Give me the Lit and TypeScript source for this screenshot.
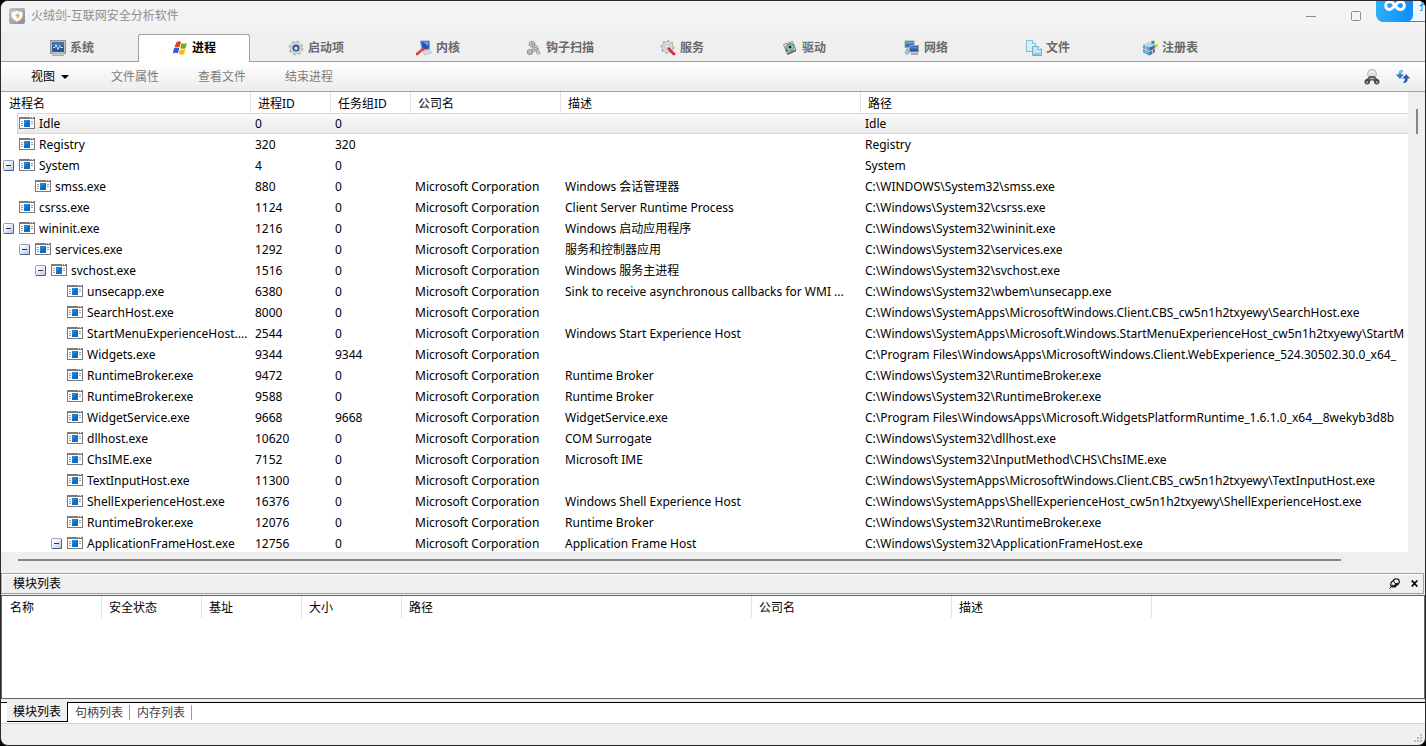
import { LitElement, html, svg, css, nothing, TemplateResult } from "lit";
import { customElement, state } from "lit/decorators.js";
import { classMap } from "lit/directives/class-map.js";
import { styleMap } from "lit/directives/style-map.js";

interface Tab {
  label: string;
  icon: TemplateResult;
}

interface Proc {
  depth: number;
  name: string;
  pid: number;
  group: number;
  company?: string;
  desc?: string;
  path: string;
  open?: boolean;
}

const MS = "Microsoft Corporation";

const p = (
  depth: number,
  name: string,
  pid: number,
  group: number,
  company: string,
  desc: string,
  path: string,
  open = false
): Proc => ({ depth, name, pid, group, company, desc, path, open });

const PROCS: Proc[] = [
  p(0, "Idle", 0, 0, "", "", "Idle"),
  p(0, "Registry", 320, 320, "", "", "Registry"),
  p(0, "System", 4, 0, "", "", "System", true),
  p(1, "smss.exe", 880, 0, MS, "Windows 会话管理器", "C:\\WINDOWS\\System32\\smss.exe"),
  p(0, "csrss.exe", 1124, 0, MS, "Client Server Runtime Process", "C:\\Windows\\System32\\csrss.exe"),
  p(0, "wininit.exe", 1216, 0, MS, "Windows 启动应用程序", "C:\\Windows\\System32\\wininit.exe", true),
  p(1, "services.exe", 1292, 0, MS, "服务和控制器应用", "C:\\Windows\\System32\\services.exe", true),
  p(2, "svchost.exe", 1516, 0, MS, "Windows 服务主进程", "C:\\Windows\\System32\\svchost.exe", true),
  p(3, "unsecapp.exe", 6380, 0, MS, "Sink to receive asynchronous callbacks for WMI ...", "C:\\Windows\\System32\\wbem\\unsecapp.exe"),
  p(3, "SearchHost.exe", 8000, 0, MS, "", "C:\\Windows\\SystemApps\\MicrosoftWindows.Client.CBS_cw5n1h2txyewy\\SearchHost.exe"),
  p(3, "StartMenuExperienceHost....", 2544, 0, MS, "Windows Start Experience Host", "C:\\Windows\\SystemApps\\Microsoft.Windows.StartMenuExperienceHost_cw5n1h2txyewy\\StartM"),
  p(3, "Widgets.exe", 9344, 9344, MS, "", "C:\\Program Files\\WindowsApps\\MicrosoftWindows.Client.WebExperience_524.30502.30.0_x64_"),
  p(3, "RuntimeBroker.exe", 9472, 0, MS, "Runtime Broker", "C:\\Windows\\System32\\RuntimeBroker.exe"),
  p(3, "RuntimeBroker.exe", 9588, 0, MS, "Runtime Broker", "C:\\Windows\\System32\\RuntimeBroker.exe"),
  p(3, "WidgetService.exe", 9668, 9668, MS, "WidgetService.exe", "C:\\Program Files\\WindowsApps\\Microsoft.WidgetsPlatformRuntime_1.6.1.0_x64__8wekyb3d8b"),
  p(3, "dllhost.exe", 10620, 0, MS, "COM Surrogate", "C:\\Windows\\System32\\dllhost.exe"),
  p(3, "ChsIME.exe", 7152, 0, MS, "Microsoft IME", "C:\\Windows\\System32\\InputMethod\\CHS\\ChsIME.exe"),
  p(3, "TextInputHost.exe", 11300, 0, MS, "", "C:\\Windows\\SystemApps\\MicrosoftWindows.Client.CBS_cw5n1h2txyewy\\TextInputHost.exe"),
  p(3, "ShellExperienceHost.exe", 16376, 0, MS, "Windows Shell Experience Host", "C:\\Windows\\SystemApps\\ShellExperienceHost_cw5n1h2txyewy\\ShellExperienceHost.exe"),
  p(3, "RuntimeBroker.exe", 12076, 0, MS, "Runtime Broker", "C:\\Windows\\System32\\RuntimeBroker.exe"),
  p(3, "ApplicationFrameHost.exe", 12756, 0, MS, "Application Frame Host", "C:\\Windows\\System32\\ApplicationFrameHost.exe", true),
];

const icon = (body: TemplateResult, w = 16, h = 16) =>
  html`<svg class="icon" width=${w} height=${h} viewBox="0 0 ${w} ${h}" aria-hidden="true">${body}</svg>`;

const TABS: Tab[] = [
  {
    label: "系统",
    icon: icon(svg`
      <rect x="0.5" y="0.5" width="15" height="13" fill="#b9c0c6" stroke="#8b949b"/>
      <rect x="2" y="2" width="12" height="10" fill="#2c568f"/>
      <path d="M2 2h12v4H2z" fill="#47719f"/>
      <path d="M3 7.500h2l1-3 2 5 1.500-4 1 2H13" fill="none" stroke="#c5ecf2" stroke-width="1"/>
      <path d="M2 13.500h12v2H2z" fill="#cfcfcf"/>
      <path d="M2 15.500h12" stroke="#a8a8a8"/>`),
  },
  {
    label: "进程",
    icon: icon(svg`
      <path d="M4.400 2.300C6 1 8 1.100 9 1.800L7.500 7.300C5.800 6.500 4 6.600 2.300 7.500z" fill="#e2411c"/>
      <path d="M9.500 3C11 4 13 4.100 14.900 3L13.500 8.200C12 9.100 10 9 8.300 8.200z" fill="#6cae1e"/>
      <path d="M2 8.300C3.700 7.400 5.600 7.300 7.200 8.200L6 13.300C4.400 12.500 2.500 12.500 0.800 13.500z" fill="#3a55d8"/>
      <path d="M8 9.200C9.700 10 11.600 10 13.400 9.200L12.200 13.900C10.500 14.900 8.500 14.900 6.800 14z" fill="#fbb80f"/>`),
  },
  {
    label: "启动项",
    icon: icon(svg`
      <circle cx="8" cy="8" r="6.500" fill="none" stroke="#b9bdc2" stroke-width="2" stroke-dasharray="2.600 2.500"/>
      <circle cx="8" cy="8" r="5.700" fill="#dcdfe3" stroke="#b0b4ba" stroke-width="0.800"/>
      <circle cx="8" cy="8" r="3.600" fill="#33517e"/>
      <circle cx="8" cy="8.300" r="1.900" fill="#b6d2f0"/>`),
  },
  {
    label: "内核",
    icon: icon(svg`
      <path d="M4.500 1L13.500 1 13.500 9 6 10z" fill="#1f55c0" stroke="#8ca3c4"/>
      <path d="M7 2l5.500 0-.3 4z" fill="#6fa4ec"/>
      <path d="M7 11.500l6.500-1.500 2 3-7 1.800z" fill="#d9dde2" stroke="#a9b0b8" stroke-width=".7"/>
      <path d="M1 14L7.500 8.500" stroke="#c8352a" stroke-width="2.600" stroke-linecap="round"/>
      <path d="M1.200 13.200L7 8.500" stroke="#f08c7e" stroke-width=".8"/>`),
  },
  {
    label: "钩子扫描",
    icon: icon(svg`
      <circle cx="6" cy="4" r="2.800" fill="#c9cbc9" stroke="#8e908e" stroke-width="1.300" stroke-dasharray="1.500 .8"/>
      <circle cx="6" cy="4" r="1" fill="#efefef" stroke="#666" stroke-width=".6"/>
      <circle cx="9.300" cy="8.500" r="2.800" fill="#d5d6d5" stroke="#8c8f8c" stroke-width="1.300" stroke-dasharray="1.500 .8"/>
      <circle cx="9.300" cy="8.500" r="1.100" fill="#efefef" stroke="#555" stroke-width=".6"/>
      <circle cx="4" cy="12" r="2.600" fill="#b9bbb9" stroke="#868986" stroke-width="1.300" stroke-dasharray="1.400 .7"/>
      <circle cx="12" cy="12.500" r="1.800" fill="#ccc" stroke="#888" stroke-dasharray="1.200 .6"/>`),
  },
  {
    label: "服务",
    icon: icon(svg`
      <circle cx="7.500" cy="7" r="6" fill="none" stroke="#b2b2b2" stroke-width="2" stroke-dasharray="2.300 2.200"/>
      <circle cx="7.500" cy="7" r="5.300" fill="#dedede" stroke="#b0b0b0" stroke-width=".8"/>
      <circle cx="7.500" cy="7" r="2.600" fill="#f1f1f1" stroke="#a4a4a4" stroke-width=".8"/>
      <path d="M7.500 7.500l2.500 2" stroke="#777" stroke-width="2"/>
      <path d="M9.500 9.500L14 14" stroke="#d3232a" stroke-width="2.800" stroke-linecap="round"/>
      <path d="M10 9.300l4 4" stroke="#f37a75" stroke-width=".7"/>`),
  },
  {
    label: "驱动",
    icon: icon(svg`
      <path d="M1.500 4.500L10.500 1.500 14 9.500 5 13.500z" fill="#e3eae3" stroke="#8a938c"/>
      <path d="M5 13.500L14 9.500v1.800L5.500 15z" fill="#5a615b"/>
      <ellipse cx="8" cy="7.300" rx="4" ry="3.400" transform="rotate(-25 8 7.300)" fill="#9ccbae" stroke="#4c8263"/>
      <circle cx="8" cy="7" r="1.600" fill="#15402a"/>
      <path d="M3.500 9.500l2 2.500" stroke="#3b4c41"/>`),
  },
  {
    label: "网络",
    icon: icon(svg`
      <rect x="1" y="1" width="9" height="6.500" fill="#3e6ba8" stroke="#9aa5b0"/>
      <path d="M2 2h7v2H2z" fill="#6f98cc"/>
      <path d="M2 9.500h5" stroke="#aaa" stroke-width="2"/>
      <rect x="5.500" y="5.500" width="9" height="6.500" fill="#2d5a9c" stroke="#9aa5b0"/>
      <path d="M6.500 6.500h7v2h-7z" fill="#5d8bc8"/>
      <path d="M7 14h7" stroke="#aaa" stroke-width="2"/>
      <circle cx="3" cy="12.500" r="1.900" fill="#a9cfe6" stroke="#6e9ab8" stroke-width=".6"/>`),
  },
  {
    label: "文件",
    icon: icon(svg`
      <path d="M.5 .5h6l3 3V11.500H.5z" fill="#d5eef8" stroke="#85bdd8"/>
      <path d="M6.500 .5v3h3" fill="#fff" stroke="#85bdd8"/>
      <path d="M6.500 6.500h5.500l3.500 3V15.500H6.500z" fill="#c6e6f5" stroke="#6eadcd"/>
      <path d="M12 6.500v3h3.500" fill="#f4fbff" stroke="#6eadcd"/>
      <path d="M7.500 13h7v2h-7z" fill="#8bc8e6"/>`),
  },
  {
    label: "注册表",
    icon: icon(svg`
      <path d="M1 5l6-2.500 6 2.500v7l-6 3.500-6-3z" fill="#5ba3d0"/>
      <path d="M1 5l6-2.500L13 5 7.500 7.500z" fill="#a4d2ec"/>
      <path d="M7.500 7.500L13 5v7l-5.500 3.500z" fill="#3d82b6"/>
      <path d="M1 8.500l6.500 3L13 8.500M4 4v9.500M10.500 6.500v7M4 3.700l6 2.500" fill="none" stroke="#d3ebf7" stroke-width=".7"/>
      <path d="M9 1.500l3-1 1 2.500-3 1.200z" fill="#27a159"/>
      <path d="M12.500 4.500l3-.5.500 2.800-2.500 1z" fill="#e9c81f"/>
      <path d="M8 7.500l3-.8.5 2.500-2.500.8z" fill="#d52f30"/>`),
  },
];

const APP_ICON = icon(svg`
  <defs><linearGradient id="ag" x1="0" y1="0" x2="1" y2="1"><stop offset="0" stop-color="#c4c4c8"/><stop offset="1" stop-color="#8b8b91"/></linearGradient></defs>
  <rect width="16" height="16" rx="2" fill="url(#ag)"/>
  <path d="M2.500 4Q6 3.800 8 2.800 10 3.800 13.500 4V8.500Q12.500 11.500 8 13.800 3.500 11.500 2.500 8.500z" fill="#fafafa"/>
  <path d="M8.500 4.500l2 3L8.700 11 7.500 8.300 6 7 8 6.800z" fill="#f29a3e"/>`);

const PROC_ICON = icon(svg`
  <rect x=".5" y=".5" width="15" height="11" fill="#fff" stroke="#7a7a7a"/>
  <path d="M0 0h16v2H0z" fill="#7a7a7a"/>
  <path d="M11 .5h1M13 .5h1" stroke="#fff"/>
  <path d="M2 4.500h2M2 6.500h2M2 8.500h2M12 4.500h2M12 6.500h2" stroke="#9a9a9a"/>
  <rect x="5" y="3" width="6" height="7" fill="#0a6ec6"/>
  <path d="M5 3h6L5 8z" fill="#1b87db"/>`, 16, 13);

const MINUS = icon(svg`
  <defs><linearGradient id="mg" x1="0" y1="0" x2="1" y2="1"><stop offset=".2" stop-color="#fff"/><stop offset="1" stop-color="#b4c4e4"/></linearGradient></defs>
  <rect x=".5" y=".5" width="10" height="10" rx="1" fill="url(#mg)" stroke="#8fa0c2"/>
  <path d="M10.500 1v9.500H1" fill="none" stroke="#48608f"/>
  <path d="M3 5.500h5" stroke="#26375e"/>`, 11, 11);

const PLUS = icon(svg`
  <rect x=".5" y=".5" width="10" height="10" rx="1" fill="#e6ecf8" stroke="#7689b0"/>
  <path d="M3 5.500h5M5.500 3v5" stroke="#26375e"/>`, 11, 11);

const FIND = icon(svg`
  <circle cx="8" cy="5" r="4.300" fill="#f4f4f4" stroke="#b4b4b4" stroke-width="1.200"/>
  <path d="M5 5.500q3-3 6 0" fill="none" stroke="#c9c9c9"/>
  <path d="M4.500 8L6 6.800h4l1.500 1.200 3.500 4-2 2.500H11.500L9 11.500H7L4.500 14.500H3L1 12z" fill="#626262"/>
  <circle cx="3.200" cy="12.800" r="2.700" fill="#4b4b4b"/>
  <circle cx="12.800" cy="12.800" r="2.700" fill="#4b4b4b"/>
  <circle cx="3.200" cy="13.200" r="1" fill="#b9b9b9"/>
  <circle cx="12.800" cy="13.200" r="1" fill="#b9b9b9"/>
  <path d="M6.500 9.500h3" stroke="#ccc"/>`);

const REFRESH = icon(svg`
  <path d="M7.500 1C4.500 1 3.500 3 3.500 5.500H.8L5 10 9 5.500H6.300C6.200 4 6.500 3 8 2.200z" fill="#2f7fcb"/>
  <path d="M7.500 1C4.700 1 3.800 2.200 3.600 4.500h2.700C6.500 3 7 2.600 8 2.200z" fill="#66c6e6"/>
  <path d="M8.500 14c3 0 4.300-1.500 4.200-4.500H15.200L11.200 5.300 7 9.500H9.800c.1 2-.3 3-1.800 3.700z" fill="#2c5fae"/>`);

const PIN = icon(svg`
  <path d="M.5 10.500L3 8" stroke="#000"/>
  <path d="M2 4.500L4 3 5 1.500 7 .8 9.700 1.500 10.400 4 9.500 6 7.500 7.500 6 9H3L1.800 7.500z" fill="#fff" stroke="#000" stroke-width="1.100"/>
  <path d="M2.500 7.500l3 .6 1.500-2 2.500-.6" stroke="#222" stroke-width="1.800" fill="none"/>
  <path d="M5 2.500Q4.500 5 7 6" stroke="#000" fill="none"/>`, 11, 11);

const CLOSE = icon(svg`<path d="M.7 .5l5.600 6M6.300 .5L.7 6.500" stroke="#000" stroke-width="1.700"/>`, 7, 7);

@customElement("app-root")
export class AppRoot extends LitElement {
  @state() private tab = 1;
  @state() private lower = 0;
  @state() private selected = 0;
  @state() private closed = new Set<number>();

  static styles = css`
    :host {
      display: block;
      height: 100vh;
      background: #000;
      color: #000;
      font: 12px/16px "Noto Sans", "Noto Sans CJK SC", sans-serif;
    }
    * {
      box-sizing: border-box;
    }
    button {
      font: inherit;
      color: inherit;
      background: none;
      border: 0;
      padding: 0;
      margin: 0;
      white-space: nowrap;
    }
    .icon {
      display: block;
      flex: none;
    }
    .window {
      position: relative;
      display: flex;
      flex-direction: column;
      height: 100%;
      border: 1px solid #2d2a2e;
      border-radius: 8px;
      background: #efefef;
      overflow: hidden;
    }
    .title {
      display: flex;
      align-items: center;
      gap: 6px;
      flex: none;
      height: 30px;
      padding: 0 59px 0 8px;
      background: #f3f3f3;
      color: #8e8e8e;
    }
    .title h1 {
      flex: 1;
      margin: 0;
      font: inherit;
    }
    .winbtns {
      display: flex;
      gap: 25px;
    }
    .winbtns button {
      display: grid;
      place-items: center;
      width: 20px;
      height: 20px;
    }
    .tabs {
      display: flex;
      gap: 10px;
      flex: none;
      height: 31px;
      padding: 3px 15px 0;
      border-bottom: 1px solid #a0a0a0;
    }
    .tab {
      display: flex;
      align-items: center;
      justify-content: center;
      gap: 4px;
      width: 112px;
      height: 28px;
      padding-bottom: 2px;
      color: #6a6a6a;
      font-weight: 700;
      border: 1px solid transparent;
      border-bottom: 0;
      border-radius: 3px 3px 0 0;
    }
    .tab.on {
      background: #fff;
      border-color: #a0a0a0;
      color: #000;
    }
    .tools {
      display: flex;
      align-items: center;
      flex: none;
      height: 30px;
      padding: 0 14px 0 30px;
      border-bottom: 1px solid #a0a0a0;
      background: linear-gradient(#fff, #ececec);
    }
    .cmds {
      display: flex;
      gap: 39px;
      flex: 1;
    }
    .cmds button:disabled {
      color: #7d7d7d;
    }
    .view {
      display: flex;
      align-items: center;
      gap: 6px;
      margin-right: 3px;
    }
    .quick {
      display: flex;
      gap: 15px;
    }
    .main {
      display: grid;
      grid-template-columns: minmax(0, 1fr) 17px;
      grid-template-rows: minmax(0, 1fr) 21px;
      flex: 1;
      min-height: 0;
    }
    .list {
      background: #fff;
      overflow: hidden;
    }
    table {
      width: 100%;
      table-layout: fixed;
      border-collapse: separate;
      border-spacing: 0;
    }
    th,
    td {
      height: 21px;
      padding: 0 0 0 4px;
      text-align: left;
      font-weight: 400;
      white-space: nowrap;
      overflow: hidden;
      text-overflow: ellipsis;
      vertical-align: middle;
    }
    th {
      padding: 2px 0 0 7px;
      border-right: 1px solid #e2e2e2;
    }
    th:first-child {
      padding-left: 8px;
    }
    th:last-child {
      border-right: 0;
    }
    td:last-child {
      text-overflow: clip;
    }
    td:first-child {
      padding: 0 0 0 1px;
    }
    .node {
      display: flex;
      align-items: center;
      height: 21px;
      min-width: 0;
    }
    .exp {
      flex: none;
      width: 11px;
      height: 11px;
      margin-right: 5px;
    }
    .node span {
      margin-left: 4px;
      overflow: hidden;
      text-overflow: ellipsis;
    }
    .sel td {
      background: linear-gradient(#fafafa, #e9e9e9);
      box-shadow: inset 0 1px #d9d9d9, inset 0 -1px #d9d9d9;
    }
    .sel td:first-child {
      background: linear-gradient(#fafafa, #e9e9e9) 16px 0 no-repeat;
      box-shadow: none;
    }
    .sel .node {
      background: linear-gradient(90deg, #d9d9d9, #d9d9d9) 15px 0 / 100% 1px no-repeat,
        linear-gradient(90deg, #d9d9d9, #d9d9d9) 15px 100% / 100% 1px no-repeat,
        linear-gradient(#d9d9d9, #d9d9d9) 15px 0 / 1px 100% no-repeat;
    }
    .vbar {
      padding: 17px 0 0 8px;
    }
    .vthumb {
      width: 2px;
      height: 25px;
      background: #868686;
    }
    .hbar {
      grid-column: 1 / 3;
      padding: 7px 84px 0 17px;
    }
    .hthumb {
      height: 2px;
      background: #868686;
    }
    .panelhead {
      display: flex;
      align-items: center;
      flex: none;
      height: 21px;
      margin: 0 1px 1px 0;
      padding: 0 5px 0 11px;
      border: 1px solid #a0a0a0;
      box-shadow: inset 0 1px #fff, inset 1px 0 #fff;
    }
    .panelhead h2 {
      flex: 1;
      margin: 0;
      font: inherit;
    }
    .panelhead button + button {
      margin-left: 11px;
    }
    .modules {
      flex: none;
      height: 104px;
      margin-bottom: 3px;
      border: 1px solid #646464;
      background: #fff;
      overflow: hidden;
    }
    .modules th {
      height: 22px;
    }
    .modules th:last-child {
      border-right: 1px solid #e2e2e2;
    }
    .modules table {
      width: 1150px;
    }
    .ltabs {
      display: flex;
      flex: none;
      height: 21px;
      background: linear-gradient(#000, #000) 0 0 / 100% 1px no-repeat, #fff;
      padding-left: 6px;
    }
    .ltab {
      margin: 3px 0;
      padding: 0 6px 0 7px;
      border-right: 1px solid #9a9a9a;
      color: #444;
      line-height: 14px;
    }
    .ltab.on {
      margin: 0;
      padding: 0 6px;
      height: 20px;
      color: #000;
      background: #efefef;
      border-right: 1px solid #000;
      border-bottom: 1px solid #000;
      line-height: 20px;
    }
    .status {
      display: flex;
      align-items: flex-end;
      justify-content: flex-end;
      flex: none;
      height: 22px;
      padding: 2px;
      border-top: 1px solid #d4d4d4;
    }
    .float {
      position: absolute;
      top: -17px;
      right: -104px;
      display: flex;
      width: 153px;
      height: 38px;
      border-radius: 8px;
      background: #eef7ff;
      box-shadow: inset 0 -1px #1296f0;
      color: #1296f0;
      font-size: 14px;
      line-height: 40px;
      overflow: hidden;
    }
    .float .badge {
      display: block;
      flex: none;
      width: 37px;
      height: 38px;
      margin-right: 6px;
      border-radius: 0 0 7px 7px;
      background: linear-gradient(90deg, #2bb0fb, #0c8cfc);
    }
  `;

  private toggle(e: Event, pid: number) {
    e.stopPropagation();
    const next = new Set(this.closed);
    next.has(pid) ? next.delete(pid) : next.add(pid);
    this.closed = next;
  }

  private visible(): Proc[] {
    let hideBelow = Infinity;
    return PROCS.filter((r) => {
      if (r.depth > hideBelow) return false;
      hideBelow = this.closed.has(r.pid) ? r.depth : Infinity;
      return true;
    });
  }

  private row(r: Proc) {
    const indent = styleMap({ paddingLeft: `${1 + r.depth * 16}px` });
    return html`<tr class=${classMap({ sel: this.selected === r.pid })} @click=${() => (this.selected = r.pid)}>
      <td>
        <div class="node" style=${indent}>
          ${r.open
            ? html`<button class="exp" aria-label="展开或折叠 ${r.name}" @click=${(e: Event) => this.toggle(e, r.pid)}>
                ${this.closed.has(r.pid) ? PLUS : MINUS}
              </button>`
            : html`<div class="exp"></div>`}
          ${PROC_ICON}<span>${r.name}</span>
        </div>
      </td>
      <td>${r.pid}</td>
      <td>${r.group}</td>
      <td>${r.company || nothing}</td>
      <td>${r.desc || nothing}</td>
      <td>${r.path}</td>
    </tr>`;
  }

  private cols(widths: number[]) {
    return html`<colgroup>
      ${widths.map((w) => html`<col style=${styleMap({ width: w ? `${w}px` : "auto" })} />`)}
    </colgroup>`;
  }

  render() {
    return html`<div class="window">
      <header class="title">
        ${APP_ICON}
        <h1>火绒剑-互联网安全分析软件</h1>
        <div class="winbtns">
          <button aria-label="最小化">${icon(svg`<path d="M0 5.500h10" stroke="#8e8e8e"/>`, 10, 10)}</button>
          <button aria-label="最大化">
            ${icon(svg`<rect x=".5" y=".5" width="9" height="9" rx="1" fill="none" stroke="#8e8e8e"/>`, 10, 10)}
          </button>
        </div>
      </header>
      <nav class="tabs" role="tablist">
        ${TABS.map(
          (t, i) => html`<button
            role="tab"
            aria-selected=${i === this.tab}
            class=${classMap({ tab: true, on: i === this.tab })}
            @click=${() => (this.tab = i)}
          >
            ${t.icon}<span>${t.label}</span>
          </button>`
        )}
      </nav>
      <div class="tools">
        <div class="cmds">
          <button class="view">
            视图 ${icon(svg`<path d="M0 0h8L4 4z" fill="#000"/>`, 8, 4)}
          </button>
          <button disabled>文件属性</button>
          <button disabled>查看文件</button>
          <button disabled>结束进程</button>
        </div>
        <div class="quick">
          <button aria-label="查找">${FIND}</button>
          <button aria-label="刷新">${REFRESH}</button>
        </div>
      </div>
      <main class="main">
        <div class="list">
          <table>
            ${this.cols([250, 80, 80, 150, 300, 0])}
            <thead>
              <tr>
                <th>进程名</th>
                <th>进程ID</th>
                <th>任务组ID</th>
                <th>公司名</th>
                <th>描述</th>
                <th>路径</th>
              </tr>
            </thead>
            <tbody>
              ${this.visible().map((r) => this.row(r))}
            </tbody>
          </table>
        </div>
        <div class="vbar"><div class="vthumb"></div></div>
        <div class="hbar"><div class="hthumb"></div></div>
      </main>
      <div class="panelhead">
        <h2>模块列表</h2>
        <button aria-label="固定">${PIN}</button>
        <button aria-label="关闭">${CLOSE}</button>
      </div>
      <div class="modules">
        <table>
          ${this.cols([100, 100, 100, 100, 350, 200, 200])}
          <thead>
            <tr>
              ${["名称", "安全状态", "基址", "大小", "路径", "公司名", "描述"].map((h) => html`<th>${h}</th>`)}
            </tr>
          </thead>
        </table>
      </div>
      <div class="ltabs" role="tablist">
        ${["模块列表", "句柄列表", "内存列表"].map(
          (t, i) => html`<button
            role="tab"
            aria-selected=${i === this.lower}
            class=${classMap({ ltab: true, on: i === this.lower })}
            @click=${() => (this.lower = i)}
          >
            ${t}
          </button>`
        )}
      </div>
      <footer class="status">
        ${icon(
          svg`<path d="M9 1h2v2H9zM6 4h2v2H6zM9 4h2v2H9zM3 7h2v2H3zM6 7h2v2H6zM9 7h2v2H9z" fill="#bdbdbd"/>`,
          12,
          10
        )}
      </footer>
      <button class="float">
        <svg class="badge" viewBox="0 0 37 38" aria-hidden="true">
          <path
            d="M19 21.500c-2-2.800-3.500-4-5.300-4a4 4 0 0 0 0 8c3.500 0 7-8 10.600-8a4 4 0 0 1 0 8c-1.800 0-3.300-1.300-5.300-4"
            fill="none"
            stroke="#fff"
            stroke-width="3"
          />
        </svg>
        <span>拖</span>
      </button>
    </div>`;
  }
}
